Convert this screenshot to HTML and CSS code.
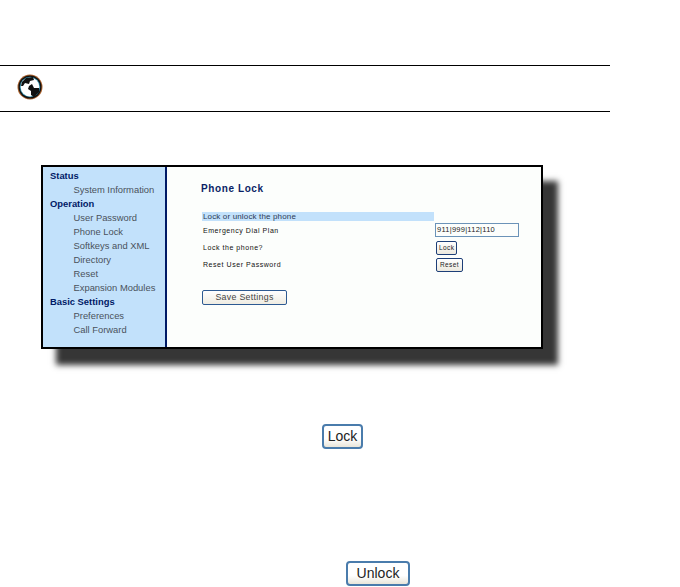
FILE: index.html
```html
<!DOCTYPE html>
<html lang="en">
<head>
<meta charset="utf-8">
<title>Phone Lock</title>
<link rel="stylesheet" href="styles.css">
</head>
<body>
<div class="note">
  <svg class="globe" width="26" height="26" viewBox="0 0 26 26" aria-hidden="true">
    <circle cx="13" cy="13" r="12.5" fill="#a8602c"/>
    <circle cx="13" cy="13" r="11.5" fill="#111"/>
    <circle cx="13" cy="13" r="10.2" fill="#2b8aa5"/>
    <circle cx="13" cy="13" r="9.4" fill="#fff"/>
    <path d="M5 8 L9 4 L16 3 L17 6 L13 7 L12 10 L8 9 L6 12 L4 12 Z" fill="#111"/>
    <path d="M12 12 L15 10 L17 14 L22 14 L22 18 L17 23 L14 21 L14 17 L11 15 Z" fill="#111"/>
  </svg>
</div>

<div class="shot">
  <nav class="side">
    <div class="head">Status</div>
    <div class="item">System Information</div>
    <div class="head">Operation</div>
    <div class="item">User Password</div>
    <div class="item">Phone Lock</div>
    <div class="item">Softkeys and XML</div>
    <div class="item">Directory</div>
    <div class="item">Reset</div>
    <div class="item">Expansion Modules</div>
    <div class="head">Basic Settings</div>
    <div class="item">Preferences</div>
    <div class="item">Call Forward</div>
  </nav>
  <main class="panel">
    <h1 class="title">Phone Lock</h1>
    <div class="band">Lock or unlock the phone</div>
    <div class="form">
      <span class="label">Emergency Dial Plan</span>
      <span class="input">911|999|112|110</span>
      <span class="label">Lock the phone?</span>
      <span><span class="mini mini-lock">Lock</span></span>
      <span class="label">Reset User Password</span>
      <span><span class="mini">Reset</span></span>
    </div>
    <div class="save">Save Settings</div>
  </main>
</div>

<div class="row row-lock"><span class="btn btn-lock">Lock</span></div>
<div class="row row-unlock"><span class="btn btn-unlock">Unlock</span></div>
</body>
</html>
```

FILE: styles.css
```css
html, body {
  margin: 0;
  padding: 0;
  background: #fff;
}
body {
  width: 680px;
  height: 587px;
  overflow: hidden;
  font-family: "Liberation Sans", Arial, sans-serif;
}
.note {
  box-sizing: border-box;
  width: 610px;
  height: 47px;
  margin-top: 65px;
  border-top: 1px solid #000;
  border-bottom: 1px solid #000;
  padding: 8px 0 0 17px;
}
.globe {
  display: block;
}
.shot {
  box-sizing: border-box;
  display: flex;
  width: 502px;
  height: 184px;
  margin: 53px 0 0 41px;
  border: 2px solid #000;
  background: #fcfefc;
  box-shadow: 15px 16px 6px #363636;
}
.side {
  box-sizing: border-box;
  width: 124px;
  padding-top: 2px;
  background: #c2e1fb;
  border-right: 2px solid #001a66;
  font-size: 9.4px;
  line-height: 14px;
}
.head {
  padding-left: 7px;
  font-weight: 700;
  color: #001a66;
}
.item {
  padding-left: 30.5px;
  color: #4a525c;
}
.panel {
  flex: 1;
  padding: 15px 0 0 35px;
}
.title {
  margin: 0 0 0 -1px;
  font-size: 10px;
  line-height: 14px;
  font-weight: 700;
  letter-spacing: 0.6px;
  color: #0a1f66;
}
.band {
  width: 231px;
  height: 9px;
  margin-top: 16px;
  padding-left: 1px;
  background: #c2e1fb;
  font-size: 8px;
  line-height: 9px;
  letter-spacing: 0.15px;
  color: #2c3a55;
}
.form {
  display: grid;
  grid-template-columns: 233px auto;
  grid-auto-rows: 17px;
  align-items: start;
  margin-top: 2px;
}
.label {
  padding-left: 1px;
  font-size: 7px;
  line-height: 15px;
  letter-spacing: 0.55px;
  color: #111;
}
.input {
  box-sizing: border-box;
  display: block;
  width: 84px;
  height: 14px;
  border: 1px solid #6b93b8;
  padding-left: 1px;
  font-size: 7.5px;
  line-height: 12px;
  letter-spacing: 0.25px;
  color: #222;
}
.mini {
  box-sizing: border-box;
  display: block;
  width: fit-content;
  height: 14px;
  margin: 1px 0 0 1px;
  padding: 0 3px;
  border: 1px solid #1d3f78;
  border-radius: 2px;
  background: linear-gradient(#fff, #ece9de);
  font-size: 6.5px;
  line-height: 12px;
  letter-spacing: 0.4px;
  color: #222;
}
.mini-lock {
  padding: 0 2px;
}
.save {
  box-sizing: border-box;
  width: 85px;
  height: 15px;
  margin-top: 16px;
  border: 1px solid #2d5a92;
  border-radius: 2px;
  background: linear-gradient(#fff, #efece2);
  font-size: 8.8px;
  line-height: 13px;
  letter-spacing: 0.3px;
  text-align: center;
  color: #444;
}
.row {
  display: flex;
}
.row-lock {
  margin-top: 75px;
  padding-left: 322px;
}
.row-unlock {
  margin-top: 112px;
  padding-left: 346px;
}
.btn {
  box-sizing: border-box;
  height: 25px;
  border: 2px solid #4a7cac;
  border-radius: 4px;
  background: linear-gradient(#fff 60%, #e9e5d9);
  font-size: 14px;
  line-height: 21px;
  text-align: center;
  color: #222;
}
.btn-lock {
  width: 41px;
}
.btn-unlock {
  width: 64px;
}
```
